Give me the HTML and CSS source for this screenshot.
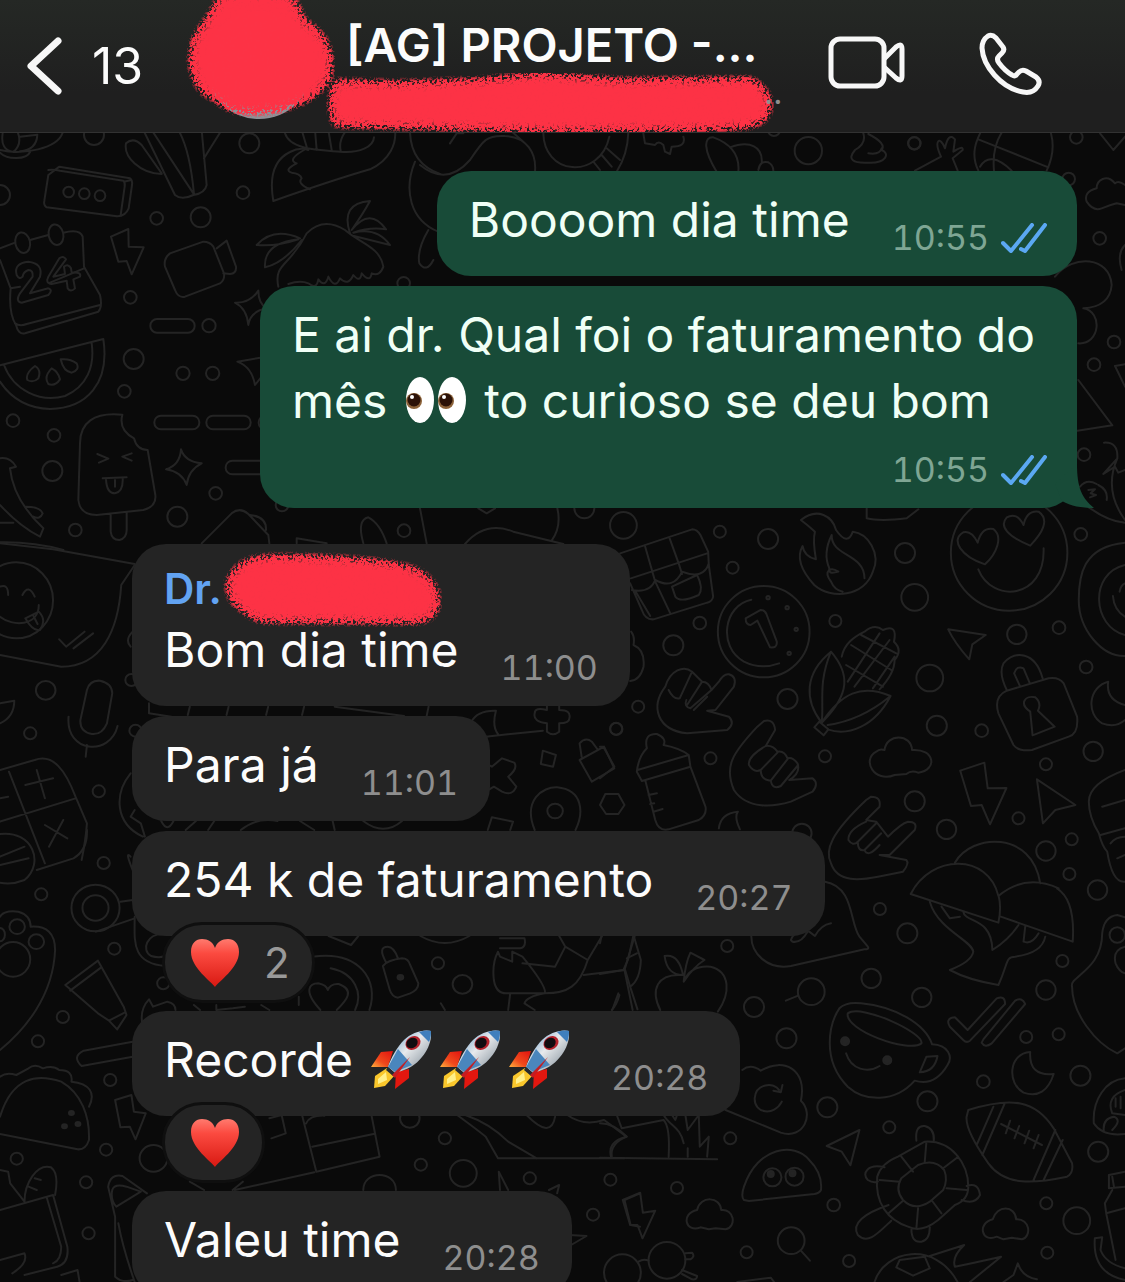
FILE: index.html
```
<!DOCTYPE html>
<html lang="pt-BR">
<head>
<meta charset="utf-8">
<meta name="viewport" content="width=device-width, initial-scale=1">
<title>[AG] PROJETO</title>
<link rel="stylesheet" href="styles.css">
</head>
<body>
<svg class="defs" aria-hidden="true">
  <defs>
    <filter id="crayon" x="-10%" y="-20%" width="120%" height="140%">
      <feTurbulence type="fractalNoise" baseFrequency="0.4" numOctaves="3" seed="4" result="grain"/>
      <feColorMatrix in="grain" type="matrix" values="0 0 0 0 0  0 0 0 0 0  0 0 0 0 0  6 0 0 0 -2.2" result="noise"/>
      <feGaussianBlur in="SourceAlpha" stdDeviation="5" result="soft"/>
      <feComposite in="soft" in2="noise" operator="arithmetic" k1="0" k2="1.7" k3="0.9" k4="-1.15"/>
      <feComponentTransfer result="mask"><feFuncA type="linear" slope="1.8" intercept="0"/></feComponentTransfer>
      <feFlood flood-color="#fd3345"/>
      <feComposite in2="mask" operator="in"/>
    </filter>
    <linearGradient id="heartRed" x1="0" y1="0" x2="0" y2="1"><stop offset="0" stop-color="#ff7a6e"/><stop offset=".3" stop-color="#fb4a40"/><stop offset="1" stop-color="#d81912"/></linearGradient>
    <linearGradient id="hull" x1="0" y1="0" x2="1" y2="1"><stop offset="0" stop-color="#4d8cc4"/><stop offset=".45" stop-color="#e8eaec"/><stop offset="1" stop-color="#6f7f8c"/></linearGradient>
    <linearGradient id="fin" x1="1" y1="0" x2="0" y2="1"><stop offset="0" stop-color="#e3120f"/><stop offset=".6" stop-color="#f04a1c"/><stop offset="1" stop-color="#ffb23e"/></linearGradient>
    <symbol id="heart" viewBox="0 0 50 50"><path fill="url(#heartRed)" d="M25 49C22 44 1 30 1 14C1 5 6 1 12 1C18 1 23 4 25 10C27 4 32 1 38 1C44 1 49 5 49 14C49 30 28 44 25 49Z"/></symbol>
    <symbol id="rocket" viewBox="0 0 60 60">
      <path fill="url(#fin)" d="M22 21L10 22L0 37L17 37Z"/>
      <path fill="#e3170f" d="M38 39L38 48L24 59L25 42Z"/>
      <path fill="#f9c72c" d="M16 38L4 46L3 58L14 56L24 45Z"/>
      <path fill="#fff08a" d="M15 42L7 49L7 54L16 50Z"/>
      <path fill="url(#hull)" d="M60 1C52 -1 40 3 33 10C26 17 20 28 17 37L24 43C36 40 45 35 51 27C58 19 61 8 60 1Z"/>
      <path fill="#3f7fbd" d="M60 1C56 0 51 1 48 2L58 12C60 8 60 4 60 1Z"/>
      <path fill="#4a86bd" d="M27 19L17 37L24 42L41 35Z"/>
      <path fill="#252a30" d="M17 37L24 43L22 46L15 40Z"/>
      <path fill="#c41d22" d="M39 27L21 45L24 48Z"/>
      <ellipse cx="42" cy="13" rx="8" ry="6.500" transform="rotate(-35 42 13)" fill="#b5222c"/>
      <ellipse cx="41" cy="13" rx="6" ry="5" transform="rotate(-35 41 13)" fill="#120c10"/>
    </symbol>
    <symbol id="eyes" viewBox="0 0 62 48">
      <ellipse cx="15" cy="24" rx="14" ry="23" fill="#fff"/><ellipse cx="47" cy="24" rx="14" ry="23" fill="#fff"/>
      <circle cx="9" cy="25" r="8" fill="#8c6239"/><circle cx="9" cy="24" r="6.500" fill="#2c1208"/><circle cx="7" cy="21" r="2" fill="#fff"/>
      <circle cx="41" cy="25" r="8" fill="#8c6239"/><circle cx="41" cy="24" r="6.500" fill="#2c1208"/><circle cx="39" cy="21" r="2" fill="#fff"/>
    </symbol>
    <symbol id="ticks" viewBox="0 0 46 30"><path fill="none" stroke="#5ba8f2" stroke-width="4" stroke-linecap="round" stroke-linejoin="round" d="M2 20L10 28L31 2M20 26L24 28L44 2"/></symbol>
  </defs>
</svg>

<header class="topbar">
  <button class="back" aria-label="Voltar, 13 conversas">
    <svg width="36" height="58" viewBox="0 0 36 58" aria-hidden="true"><path d="M32 4L5 29L32 54" fill="none" stroke="#f7f7f7" stroke-width="7" stroke-linecap="round" stroke-linejoin="round"/></svg>
    <span>13</span>
  </button>
  <svg class="avatar" width="150" height="132" viewBox="185 0 150 132" role="img" aria-label="Foto do grupo">
    <circle cx="259" cy="65" r="54" fill="#8d9197"/>
    <path filter="url(#crayon)" d="M222 -8L290 -8L300 8L304 20C330 32 336 58 330 80C320 96 300 106 288 108C276 113 252 115 236 112C222 109 214 97 204 95C184 74 186 40 204 22Z"/>
  </svg>
  <div class="group">
    <h1>[AG] PROJETO -...</h1>
    <div class="members">
      <svg width="448" height="60" viewBox="326 73 448 60" role="img" aria-label="Participantes ocultos"><path filter="url(#crayon)" d="M333 80L400 82L480 79L540 73L620 79L752 78C768 87 778 104 766 119C758 129 740 128 720 130L560 132L400 128L333 126L329 104Z"/></svg>
      <span>..</span>
    </div>
  </div>
  <button class="call" aria-label="Chamada de vídeo">
    <svg width="78" height="56" viewBox="0 0 78 56" aria-hidden="true"><g fill="none" stroke="#f7f7f7" stroke-width="5" stroke-linejoin="round"><rect x="3" y="3" width="53" height="47" rx="9"/><path d="M56 23L68 11Q74 6 74 13V40Q74 47 68 42L56 31"/></g></svg>
  </button>
  <button class="call" aria-label="Chamada de voz">
    <svg width="64" height="64" viewBox="0 0 64 64" aria-hidden="true"><path fill="none" stroke="#f7f7f7" stroke-width="5" stroke-linejoin="round" d="M9 4Q13 2 17 6L24 15Q26 18 23 21L20 24Q17 27 20 31Q26 39 33 43Q36 45 38 42L40 40Q43 37 47 39L57 45Q62 49 59 54Q54 62 44 60C22 56 4 34 3 16Q3 8 9 4Z"/></svg>
  </button>
</header>

<main class="chat">
  <svg class="wallpaper" viewBox="0 133 1125 1149" preserveAspectRatio="xMinYMin slice" aria-hidden="true">
    <g transform="translate(0 130) scale(.333333)">
      <path d="M0 68C20 90 80 90 90 66M0 60C60 75 180 60 190 0M8 10Q0 60 40 66Q70 40 50 0M60 20L112 14Q110 60 60 64"/>
      <path d="M145 135L178 110L390 145Q398 150 396 165L386 235Q375 262 345 258L140 232Q130 225 133 212ZM145 120Q160 118 180 122L370 152Q376 158 374 170L362 255M372 155L394 150"/>
      <circle cx="206" cy="186" r="16"/><circle cx="253" cy="191" r="16"/><circle cx="300" cy="197" r="16"/>
      <path d="M430 0L525 195Q545 212 580 195Q615 190 620 165L605 0M455 0L582 193M535 0Q570 60 582 193M665 0L612 85M485 132C420 130 370 80 378 40Q400 20 425 45L485 130"/>
      <path d="M855 10C870 60 960 60 1020 65C1080 70 1120 50 1122 22M820 213Q800 100 870 66Q900 50 925 60M820 213Q1000 150 1110 118C1170 90 1190 40 1185 0M912 60Q860 90 890 100Q850 120 875 128Q900 130 905 145Q890 160 930 178M905 0L920 50M945 0L950 60M985 0L995 60M1040 0Q1015 30 1022 62"/>
      <circle cx="282" cy="15" r="30"/><circle cx="748" cy="40" r="30"/><circle cx="729" cy="188" r="19"/><circle cx="0" cy="195" r="30"/><circle cx="470" cy="265" r="19"/><circle cx="602" cy="262" r="30"/>
      <path d="M0 355L45 338M90 330L145 315M190 308Q240 295 248 320L252 410L300 495Q308 530 295 545L75 610Q55 615 48 585Q25 550 32 475L0 390M252 415L150 458M32 475L60 470M45 580Q60 590 80 582L300 525"/>
      <ellipse cx="68" cy="338" rx="22" ry="31" transform="rotate(-12 68 338)"/><ellipse cx="168" cy="314" rx="22" ry="31" transform="rotate(-12 168 314)"/>
      <path d="M50 435Q40 400 85 395Q130 400 120 440L90 490L145 475Q160 480 145 495L65 518Q45 515 60 490L98 440Q100 420 85 420Q70 425 68 440Q58 450 50 435ZM178 385Q190 375 198 388L160 440L195 432L192 410Q205 400 213 415L215 428Q245 425 240 440L220 448L225 475Q212 488 203 475L200 452L155 462Q135 460 145 440Z"/>
      <path d="M333 320L385 297L386 350L431 352L395 433L380 393L355 395Z"/>
      <path d="M510 370L610 335Q630 335 640 350L672 430Q675 450 660 460L555 500Q535 505 525 480L495 410Q490 385 510 370ZM650 355L680 332L708 410Q710 430 690 432L670 430"/>
      <path d="M835 470C820 400 870 410 920 310Q970 260 1035 300C1080 340 1140 350 1150 410Q1140 440 1115 430Q1110 460 1085 430Q1080 460 1060 435Q1045 470 1020 445Q1005 480 985 440Q975 475 955 448Q950 480 925 460Q900 450 865 462M900 325Q820 290 770 345Q830 350 895 328Q790 340 795 412Q850 400 905 330M1050 310Q1020 220 1110 213Q1090 250 1055 300Q1110 230 1158 298Q1110 290 1060 308Q1130 290 1170 345L1062 318"/>
      <path d="M775 482Q775 520 800 535Q750 545 745 585Q740 535 705 518Q750 520 775 482ZM800 680L712 695Q755 710 765 765L785 740"/>
      <circle cx="391" cy="502" r="19"/><rect x="451" y="567" width="133" height="41" rx="20"/><circle cx="627" cy="587" r="20"/><circle cx="401" cy="687" r="30"/><circle cx="549" cy="730" r="20"/><circle cx="638" cy="730" r="20"/><circle cx="373" cy="784" r="19"/>
      <path d="M0 706L310 627C330 760 260 835 150 837C80 835 30 800 0 755M12 705C40 780 120 820 195 798C260 770 285 710 275 640M105 708Q75 730 82 750Q100 760 115 745Q125 720 105 708ZM155 715Q130 740 145 762Q165 770 180 748Q175 725 155 715ZM182 688Q190 725 215 728Q240 720 230 700Q210 685 182 688Z"/>
      <circle cx="39" cy="872" r="19"/><circle cx="162" cy="916" r="19"/><circle cx="157" cy="1023" r="30"/><circle cx="226" cy="1200" r="19"/><circle cx="647" cy="1090" r="19"/><circle cx="532" cy="1160" r="30"/>
      <path d="M367 854C280 845 240 880 240 940L235 1110Q240 1155 290 1155L430 1140Q470 1130 466 1095L443 960Q410 960 402 925Q355 900 367 854ZM292 972L325 986L297 998M395 970L367 980L395 992M308 1045L380 1042M318 1048Q320 1090 345 1090Q370 1085 368 1045M345 1050V1070M332 1155V1205Q335 1230 358 1230Q380 1225 380 1200V1148"/>
      <path d="M543 958Q555 995 605 1000Q565 1020 560 1065Q545 1025 498 1018Q540 1005 543 958Z"/>
      <rect x="463" y="857" width="135" height="41" rx="20"/><rect x="619" y="857" width="133" height="41" rx="20"/><rect x="776" y="857" width="133" height="41" rx="20"/><rect x="677" y="992" width="133" height="41" rx="20"/>
      <path d="M0 985Q30 980 48 1010L30 1015M30 1015Q40 1110 130 1195L120 1220Q60 1190 0 1125M78 1130Q120 1130 128 1150Q120 1170 100 1160M0 1178H40M0 1237Q100 1235 190 1260"/>
      <path d="M605 1240L695 1150Q720 1130 745 1152L805 1215L808 1240M750 1155Q800 1160 798 1200M1090 1240Q1070 1170 1105 1162Q1140 1180 1160 1240M1260 1135L1280 1240M890 1240V1225L980 1240"/><circle cx="1212" cy="1202" r="19"/><circle cx="846" cy="1125" r="19"/>
      <path d="M1230 0Q1230 100 1320 132M1245 95C1210 180 1230 270 1315 305M1285 300Q1250 360 1258 400Q1280 430 1300 390"/><circle cx="1211" cy="460" r="19"/>
    </g>
    <g transform="translate(420 130) scale(.333333)">
      <path d="M0 105Q80 170 150 90C190 30 200 15 255 18C320 20 350 70 345 125M90 40L110 10L130 10M270 0L310 35M370 0C365 140 540 150 568 20M625 0Q625 70 590 125M560 55L600 90M545 75L575 110M520 95L540 120M670 10L675 40L705 45Q715 30 730 45L735 65L750 72L755 50Q800 50 790 20M890 125C850 60 850 20 880 22C930 40 960 70 955 125M930 52C990 30 1030 50 1025 100M1015 120Q1020 90 1045 97Q1060 105 1060 122M1330 10Q1340 40 1305 60C1280 90 1300 100 1345 98C1400 100 1410 70 1385 60Q1400 40 1345 12M1345 70Q1380 75 1385 55"/><circle cx="1165" cy="62" r="41"/><circle cx="1062" cy="0" r="18"/><circle cx="1483" cy="40" r="18"/>
    </g>
    <g transform="translate(180 500) scale(.333333)">
      <path d="M855 132C900 80 950 75 1000 95L1150 132M1132 25Q1145 80 1115 122M895 25L920 40L945 25"/><circle cx="1213" cy="25" r="30"/>
    </g>
    <g transform="translate(860 130) scale(.333333)">
      <path d="M165 122L243 80C220 30 240 15 255 55Q265 5 285 28L280 65Q310 45 308 60L278 85L293 122M355 122C330 70 350 30 365 0M560 122Q590 60 570 0M355 28L565 112M430 0Q395 50 402 122M360 110Q390 60 455 122"/>
      <circle cx="163" cy="40" r="19"/><circle cx="649" cy="22" r="19"/><circle cx="626" cy="147" r="19"/><circle cx="719" cy="325" r="19"/><circle cx="762" cy="636" r="19"/><circle cx="702" cy="704" r="19"/><circle cx="672" cy="974" r="19"/>
      <path d="M795 165Q775 150 765 160C740 130 710 150 710 175Q670 185 680 215Q700 245 725 235Q750 225 770 220L795 225M795 20L760 60L720 10M585 440C640 370 750 380 755 465Q750 530 670 535C730 545 720 645 655 640M795 345Q770 370 785 420M655 750L757 886L652 902M765 708L795 703M765 708L795 770M732 938Q775 935 772 985L730 1032L765 1010L775 1028L795 1020M772 985Q730 1080 795 1170M660 1070Q680 1045 710 1062M685 1080L705 1078L692 1090L708 1095L690 1102M715 1065Q745 1080 740 1110"/>
      <path d="M20 1135V1165Q60 1175 140 1165L175 1138"/>
    </g>
    <g transform="translate(600 500) scale(.3348 .333333)">
      <circle cx="70" cy="76" r="40"/><circle cx="358" cy="95" r="18"/><circle cx="502" cy="117" r="30"/><circle cx="396" cy="203" r="18"/><circle cx="298" cy="369" r="19"/><circle cx="219" cy="436" r="30"/><circle cx="911" cy="159" r="30"/><circle cx="940" cy="292" r="40"/><circle cx="703" cy="363" r="18"/><circle cx="985" cy="534" r="40"/><circle cx="1245" cy="403" r="29"/><circle cx="1371" cy="383" r="19"/><circle cx="1436" cy="103" r="19"/><circle cx="1452" cy="501" r="19"/><circle cx="560" cy="597" r="30"/><circle cx="1006" cy="677" r="30"/><circle cx="1140" cy="692" r="19"/><circle cx="672" cy="769" r="18"/><circle cx="1473" cy="754" r="29"/><circle cx="1332" cy="793" r="18"/><circle cx="330" cy="775" r="18"/><circle cx="114" cy="620" r="18"/><circle cx="48" cy="686" r="18"/><circle cx="940" cy="904" r="30"/><circle cx="1035" cy="988" r="29"/><circle cx="1250" cy="955" r="18"/><circle cx="1332" cy="1053" r="29"/><circle cx="1409" cy="1018" r="18"/><circle cx="1402" cy="1122" r="18"/><circle cx="1486" cy="1170" r="29"/><circle cx="603" cy="1000" r="29"/>
      <path d="M60 160L275 88Q290 88 300 105L323 155L325 195L338 290Q335 305 320 308L160 358Q135 360 125 330L90 250M92 235L320 160M135 140L165 245L210 340M208 115L235 190L245 222M95 270Q150 280 165 240Q220 270 245 215Q310 240 325 190M105 272L150 348M215 260L290 225Q310 265 295 285Q240 310 225 290Z"/>
      <path d="M600 60C650 20 695 50 705 90Q740 140 755 95C800 100 840 160 815 215C790 290 690 300 640 255C590 200 590 165 605 138Q610 170 645 178Q635 120 642 95Q620 75 600 60ZM790 235C790 160 690 170 692 105Q665 160 685 205Q680 225 712 215C690 200 665 210 690 245Q700 270 725 275"/>
      <circle cx="489" cy="395" r="137"/><path d="M452 299C370 315 350 440 430 485Q480 510 535 490M435 355L480 330Q492 330 497 342L528 425Q530 445 508 442L470 362L450 375Q435 375 435 355Z"/><circle cx="502" cy="293" r="5"/><circle cx="559" cy="323" r="5"/><circle cx="586" cy="388" r="5"/><circle cx="565" cy="460" r="5"/>
      <path d="M690 455C610 520 610 600 662 668C670 610 650 550 690 455ZM690 455C745 520 750 580 662 668M662 668C720 580 780 550 868 588C820 680 740 710 680 688M680 675Q780 660 865 590M640 682L655 665L682 688L668 706ZM722 470C730 430 760 410 790 395Q820 370 845 390Q890 370 878 425Q905 450 880 480Q880 520 835 568M735 495L845 560M750 435L870 510M780 405L885 460M740 545L835 400M760 560L865 420M815 565L880 470"/>
      <circle cx="1222" cy="158" r="174"/><path d="M1150 193C1080 170 1045 120 1085 97Q1110 90 1128 128Q1140 80 1175 87C1205 110 1185 160 1150 193ZM1285 137C1220 110 1190 80 1215 52Q1245 35 1265 75Q1275 30 1310 35C1345 60 1320 100 1285 137ZM1130 208C1170 310 1330 300 1325 145"/>
      <path d="M1568 128C1440 140 1430 230 1430 300C1430 390 1500 470 1568 468M1568 195C1460 220 1470 380 1568 405M1552 275Q1555 255 1568 250M1532 288Q1535 330 1568 350M1460 22Q1520 65 1568 68"/>
      <path d="M1040 388L1152 405L1112 433L1103 478Q1060 430 1040 388ZM1076 812L1148 788L1158 865L1214 864L1165 973L1140 915L1108 918ZM1305 838L1420 915L1360 930L1323 970Z"/>
      <path d="M1215 572L1340 535Q1370 530 1385 550L1425 650Q1430 700 1400 710L1290 750Q1250 755 1235 735L1190 640Q1175 590 1215 572ZM1215 570Q1190 520 1205 490C1240 450 1300 455 1322 535M1255 560L1237 520Q1245 495 1265 505L1283 548M1285 635C1250 610 1270 585 1300 592Q1320 610 1308 632L1358 680L1292 706Z"/>
      <path d="M1518 545C1460 560 1450 640 1500 670Q1540 685 1568 660M1518 545Q1510 600 1568 615M850 750C855 700 930 700 932 750C1000 745 1010 810 950 818Q930 810 915 822L880 825C820 850 780 780 825 755Q835 745 850 750Z"/>
      <path d="M195 560C150 620 170 690 260 700L380 690Q405 670 385 650L320 632L345 630L400 560Q410 530 385 523Q370 520 355 545L333 570Q325 545 305 545Q285 525 275 515C250 495 210 510 195 560ZM275 515L238 595Q220 600 205 570M305 545L260 615M333 570L270 625Q250 620 258 600M320 590L280 630"/>
      <path d="M470 680C395 760 370 800 400 870C440 930 520 920 570 905L635 875Q655 850 635 835L565 840Q600 820 590 790Q575 770 560 775Q550 750 530 755Q515 735 495 738L523 690Q520 655 490 663ZM495 738Q440 770 445 795Q460 820 480 810L530 758M480 810Q480 840 510 842L562 775M510 842Q515 870 540 858L592 795"/>
      <path d="M795 900C690 1000 670 1050 690 1090C710 1150 780 1140 830 1130L905 1115Q925 1090 915 1080L835 1065L865 1065L940 990Q950 965 920 965Q900 970 860 1010L825 965L795 960L835 920Q840 890 810 890ZM795 965Q740 990 742 1020Q755 1040 770 1025L825 970M770 1025Q770 1055 790 1050L840 1000M790 1050Q800 1075 835 1035"/>
      <path d="M140 745Q130 700 170 702Q200 715 190 735Q240 745 265 765L270 800L125 843L110 815Q115 770 140 745ZM112 810L265 765M135 840L165 960Q175 995 205 988L295 960Q320 945 315 920L270 800M145 885L170 880M150 912L162 910M160 935L187 927M0 740H10L43 800L0 835M355 985Q360 940 412 935Q400 950 418 988M93 395Q105 410 100 435Q135 450 130 500Q120 540 90 543M1568 810Q1460 850 1460 905Q1460 950 1490 1000Q1500 1040 1515 1055Q1530 1150 1568 1145M1500 920L1568 900M1495 1005L1568 985M1525 1030Q1540 1010 1568 1010M1545 1075L1568 1065"/>
      <path d="M1060 1088C1110 1000 1290 990 1315 1150M928 1182C990 1060 1160 1060 1190 1188Q1270 1120 1370 1165M928 1182L1190 1268Q1200 1220 1190 1185M1365 1165Q1420 1200 1412 1325L1197 1250M985 1205C1010 1290 1110 1320 1115 1355Q1110 1385 1045 1410Q1100 1440 1190 1455C1220 1390 1210 1370 1240 1370Q1320 1360 1330 1310M1085 1235C1090 1270 1170 1250 1172 1350Q1220 1320 1250 1275M1270 1280L1265 1325Q1290 1335 1310 1300M1020 1220L1045 1255L1075 1250"/>
    </g>
    <g transform="translate(600 880) scale(.3348 .333333)">
      <circle cx="836" cy="87" r="18"/><circle cx="918" cy="160" r="30"/><circle cx="380" cy="198" r="18"/><circle cx="810" cy="295" r="29"/><circle cx="961" cy="352" r="29"/><circle cx="1332" cy="330" r="29"/><circle cx="1381" cy="243" r="18"/><circle cx="460" cy="381" r="30"/><circle cx="557" cy="475" r="30"/><circle cx="1273" cy="471" r="18"/><circle cx="1370" cy="463" r="18"/><circle cx="1435" cy="587" r="30"/><circle cx="1145" cy="605" r="19"/><circle cx="978" cy="664" r="30"/><circle cx="679" cy="682" r="30"/><circle cx="864" cy="742" r="18"/><circle cx="389" cy="775" r="18"/><circle cx="31" cy="899" r="18"/><circle cx="230" cy="924" r="18"/><circle cx="698" cy="975" r="19"/><circle cx="1488" cy="815" r="30"/><circle cx="1333" cy="970" r="18"/><circle cx="1424" cy="1022" r="40"/><circle cx="1336" cy="1118" r="18"/><circle cx="438" cy="1117" r="18"/><circle cx="744" cy="1143" r="18"/><circle cx="1545" cy="165" r="23"/>
      <path d="M672 5C760 20 745 130 775 170L800 200Q805 208 790 208L570 258C500 270 450 220 452 165M570 180Q580 150 620 155Q600 190 575 185ZM625 155L642 168Q660 135 690 130"/>
      <circle cx="631" cy="335" r="40"/><path d="M592 347L555 362"/>
      <path d="M180 390C150 330 170 280 245 285M250 305Q270 255 330 260C390 275 390 340 352 395M250 305Q255 250 270 218L312 240Q280 260 250 305ZM248 285Q235 220 193 228Q200 285 248 285M100 165L85 235L70 270L0 282M100 165L122 240Q120 300 90 320L75 270M80 235L110 220M90 320L112 388M58 345Q50 375 35 390M0 190L5 165"/>
      <path d="M715 385Q735 365 780 370C880 380 970 430 992 493C1040 495 1055 530 1038 555Q1000 620 940 602C880 670 790 665 740 620C660 540 685 430 715 385ZM740 400C780 370 970 460 960 490C920 520 730 450 740 400ZM735 520C750 570 800 580 835 558M975 530L1008 528Q1000 575 955 577Z"/><circle cx="732" cy="484" r="12" class="solid"/><circle cx="858" cy="541" r="12" class="solid"/>
      <path d="M1045 440Q1030 415 1060 412L1098 450L1185 355Q1210 345 1210 372L1105 482Q1095 490 1085 480ZM1145 478L1240 362Q1260 350 1270 372L1170 490Q1150 505 1140 488ZM1285 516C1220 520 1215 610 1265 638Q1330 660 1355 582Q1280 590 1285 516Z"/>
      <path d="M425 570Q450 550 480 572C550 530 620 570 600 662C640 700 610 780 540 758L375 690M543 665C520 710 460 700 462 655C465 610 520 605 535 630M545 615L540 637L518 632"/>
      <path d="M1100 690C1230 650 1300 660 1355 745L1410 850Q1415 880 1395 890C1300 910 1210 920 1160 850Q1090 750 1095 710ZM1175 680L1125 795M1208 672L1142 825M1360 750L1295 900M1382 780L1325 900M1198 732L1320 795M1225 722L1212 760M1252 738L1238 775M1282 752L1268 790M1310 765L1295 805"/>
      <path d="M677 798L775 750L748 856L722 815ZM430 960Q420 950 430 920C470 800 580 785 625 840Q665 880 660 930Q655 940 640 942L445 963Z"/><circle cx="515" cy="892" r="27"/><circle cx="581" cy="890" r="27"/><circle cx="510" cy="882" r="9" class="solid"/><circle cx="575" cy="880" r="9" class="solid"/>
      <path d="M970 785C1050 780 1100 850 1100 920Q1100 960 1060 975L1010 1020Q960 1060 920 1040C860 1020 820 970 828 890Q840 850 890 830ZM950 855Q1000 835 1028 870Q1040 900 1025 930L985 965Q940 995 905 960Q880 930 900 895ZM975 785L970 845M900 830L935 875M835 900L895 905M1070 830L1025 865M1095 930L1035 925M1020 1000L990 960M945 1045L950 985M862 1000L905 962M945 782Q940 735 970 738Q1000 745 997 782M850 862C800 850 780 880 800 900Q815 910 830 905M862 975C790 1000 750 1030 770 1065C800 1095 830 1060 870 1022M930 1045Q930 1090 960 1085Q985 1080 985 1042M1080 960Q1120 975 1135 945Q1130 905 1095 918"/>
      <path d="M68 960L120 938L128 998L165 992L127 1075L112 1035H90ZM290 990C300 945 360 950 362 990C400 985 410 1040 375 1048L345 1045L325 1048L300 1042C255 1060 240 1000 290 990ZM1173 1018C1185 975 1240 975 1243 1018C1285 1015 1290 1070 1260 1078L1230 1073L1205 1078L1185 1070C1140 1090 1125 1030 1173 1018Z"/>
      <circle cx="571" cy="1082" r="40"/><path d="M600 1112L627 1142"/><circle cx="67" cy="1178" r="55"/><circle cx="200" cy="1141" r="55"/><path d="M115 1145Q130 1135 145 1142M255 1120L275 1118Q285 1130 270 1138L255 1138M245 1170L290 1188Q290 1200 275 1198L245 1182M410 1206L510 1193L520 1206"/>
      <path d="M820 1206C850 1110 1000 1080 1068 1206M895 1140L970 1130L985 1165L935 1187L885 1162ZM985 1128L1088 1095Q1050 1130 1060 1160Q1110 1150 1198 1130L1105 1206M1205 1206L1235 1185L1248 1150Q1260 1190 1305 1198"/>
      <path d="M1500 160Q1505 110 1545 105L1568 112M1500 160C1500 270 1400 290 1410 320C1410 400 1480 490 1545 520L1568 505M1568 200Q1530 210 1540 250Q1550 275 1568 280M1568 595C1510 600 1470 660 1475 730Q1500 770 1568 762M1568 630Q1510 650 1530 700L1568 705M1505 755Q1500 715 1535 710Q1560 720 1530 750M1540 655V680M1555 650V685M1520 885L1568 875M1520 885V925L1568 920M1530 890L1535 920M1530 930L1508 970L1512 1000L1540 1140M1512 1000L1568 985M1478 1075L1500 1072L1495 1110Q1510 1150 1568 1165M1478 1075Q1470 1180 1568 1200"/>
      <path d="M0 730Q40 730 80 770Q30 790 35 830M50 705L65 745L190 720Q210 740 205 830M0 833L350 838M190 705C210 740 240 740 250 790M215 705L225 720L230 705M255 705L262 750L295 705L298 800L325 770L320 830M262 805V830"/>
    </g>
    <g transform="translate(0 540) scale(.40816 .333333)">
      <ellipse cx="40" cy="181" rx="90" ry="114"/><path d="M0 10L130 28L330 72M330 75L297 135C290 270 250 380 150 380L0 345M0 140Q20 130 20 165M55 165Q70 130 85 170M0 230C30 260 95 260 95 195M62 235L95 215Q115 240 98 270Q80 275 62 235ZM82 228L92 252M145 298L162 320L207 275M180 325L228 280"/>
      <ellipse cx="112" cy="451" rx="24" ry="28"/><ellipse cx="74" cy="580" rx="15" ry="18"/><ellipse cx="242" cy="754" rx="15" ry="18"/><ellipse cx="322" cy="420" rx="15" ry="18"/><ellipse cx="332" cy="572" rx="15" ry="18"/><ellipse cx="1510" cy="567" rx="15" ry="18"/>
      <path d="M213 450Q220 420 245 422Q275 430 275 460L262 550Q250 585 225 582Q195 575 197 540ZM168 530C160 640 270 650 288 558M213 615L210 650M0 490L35 482Q35 530 0 550M0 690L85 660C130 640 160 690 185 770L213 850Q210 900 200 960M0 845L185 775M22 695L110 970M62 735L130 715M90 690L110 775M0 775L20 770M110 855L165 895M155 840L120 920"/>
      <path d="M320 320Q305 300 325 275M320 700C280 760 280 850 350 890M330 810L320 830L345 850L355 890M365 490V520L420 530M465 500L460 525M560 500L555 525M657 500L652 525M745 500L740 525M820 500L990 528M1050 500L1045 530M1155 545Q1170 510 1215 512M1215 512Q1205 560 1220 582M1190 590L1330 572M1310 520Q1310 500 1340 510V498M1370 498V510Q1400 510 1395 535Q1395 550 1370 550V575Q1355 590 1340 575V550Q1305 545 1310 520"/>
      <path d="M1190 670L1205 680L1230 655L1260 668Q1270 685 1245 710L1265 740Q1255 770 1230 755L1210 740L1190 755M1330 632L1362 645L1355 680L1325 672ZM1420 660L1480 620L1505 685L1450 725ZM1425 650L1420 610Q1435 590 1450 605L1465 630M1310 870C1280 780 1330 740 1365 742C1430 750 1430 820 1410 870M1195 870L1205 832L1257 845L1250 870"/><ellipse cx="1360" cy="813" rx="19" ry="22"/><path d="M1483 762H1515L1530 795L1515 822H1485L1470 795Z"/>
      <path d="M395 843Q410 880 425 843M480 843L455 870M525 843L510 870M590 870Q630 830 680 843M735 843L770 870M815 843L820 870M890 843Q940 890 985 843"/>
    </g>
    <g transform="translate(0 830) scale(.40816 .333333)">
      <path d="M0 12C80 0 110 100 60 150Q30 165 0 158M0 80L60 50M0 105L70 85M90 120L180 85Q215 60 213 0"/>
      <ellipse cx="254" cy="99" rx="15" ry="18"/><ellipse cx="101" cy="193" rx="15" ry="18"/><ellipse cx="280" cy="356" rx="15" ry="18"/><ellipse cx="234" cy="234" rx="59" ry="70"/><ellipse cx="234" cy="234" rx="32" ry="38"/><path d="M295 215L325 210M235 305L330 265M325 120Q305 60 320 80M330 260C330 330 320 400 405 408M400 312C360 310 345 360 370 378Q390 385 405 378"/>
      <path d="M0 260Q10 240 45 245Q75 255 75 290Q135 285 135 360C130 500 60 600 0 660"/><ellipse cx="42" cy="290" rx="19" ry="22"/><ellipse cx="89" cy="335" rx="19" ry="22"/><ellipse cx="32" cy="388" rx="42" ry="52"/><ellipse cx="0" cy="314" rx="12" ry="20"/>
      <path d="M160 465L240 392L303 530L310 555L287 598L267 572L240 550ZM172 482L248 412M267 572L305 548"/><ellipse cx="154" cy="561" rx="15" ry="18"/><ellipse cx="93" cy="634" rx="15" ry="18"/><ellipse cx="270" cy="750" rx="15" ry="18"/><ellipse cx="260" cy="959" rx="15" ry="18"/><ellipse cx="41" cy="986" rx="15" ry="18"/><ellipse cx="211" cy="1057" rx="15" ry="18"/><ellipse cx="217" cy="1210" rx="15" ry="18"/><ellipse cx="376" cy="985" rx="34" ry="40"/><ellipse cx="400" cy="460" rx="15" ry="18"/>
      <path d="M325 635L205 662Q175 680 200 708L325 680M350 590Q340 540 365 508L375 530L410 515Q430 520 430 540M0 740Q15 725 40 735L70 715Q85 700 105 715Q130 705 145 720Q180 720 175 755C220 760 235 790 218 830M0 860C30 740 90 730 150 755C200 790 220 860 218 930Q210 960 190 958L0 912"/><circle cx="175" cy="849" r="6" class="solid"/><circle cx="158" cy="889" r="6" class="solid"/><circle cx="191" cy="882" r="6" class="solid"/>
      <path d="M282 810L322 795L328 845L357 850L332 928L318 890L295 892ZM0 1140L130 1095L165 1250Q170 1300 140 1310L60 1335M115 1105L150 1250Q150 1290 130 1300M60 1115C60 1060 90 1000 125 1012Q145 1030 135 1095M0 1020L20 1025L25 1060L60 1115M85 1045L100 1050M70 1070L90 1080M0 1290L60 1270Q70 1300 30 1330M150 1335L190 1320L195 1356M330 1356Q300 1250 290 1180M282 1340V1160L265 1070Q270 1030 300 1038L360 1090M275 1080Q280 1060 310 1070L345 1085L285 1130Q270 1110 275 1080M282 1340Q300 1360 325 1350"/>
      <path d="M765 380C880 360 930 450 905 540M810 415C870 430 890 490 870 540M785 540C740 480 760 460 780 460Q800 465 803 480Q810 460 830 462C870 480 850 510 825 540M938 408Q950 390 985 385Q1000 385 1005 405L1025 460Q1025 480 1005 490L975 503Q960 500 955 480ZM945 395Q925 350 950 350Q965 350 975 385"/><circle cx="981" cy="442" r="7" class="solid"/><ellipse cx="1073" cy="400" rx="15" ry="18"/><ellipse cx="1133" cy="463" rx="24" ry="28"/>
      <path d="M805 318L860 345L878 318M1030 318Q1090 360 1150 318M1225 325L1285 325Q1290 350 1275 355H1225M1220 365Q1205 400 1210 450Q1215 490 1240 490H1335Q1340 470 1280 380L1255 365V395L1225 380ZM1280 400L1360 410L1385 350L1370 318M1385 350L1440 390C1420 470 1390 490 1335 490M1440 390L1475 318M1250 490L1245 540M1335 490Q1290 500 1285 520L1310 540M1430 435L1530 420L1555 318M1530 420L1550 540M1515 490L1500 540M1080 520L1090 540M732 500V525M475 525L490 540M530 525V540L570 535L600 530M640 525L660 540"/>
      <path d="M740 855L775 1025L930 980L910 855M750 880Q760 855 795 857M765 950L915 912M575 1080L770 1027M465 1055L500 1080M595 1055L570 1080M660 865L690 855L700 910L665 925M890 1080C890 1020 970 1020 970 1080M1120 855Q1170 900 1190 920L1220 985H1530M1140 855Q1200 880 1245 935L1315 985M1290 855Q1350 930 1360 860M1390 855Q1430 890 1480 870L1535 920Q1485 935 1498 985M1225 1080L1222 1025L1245 1080M1345 1080L1370 1065L1365 1090M1395 1215L1437 1218L1395 1248M1530 1110L1568 1090M1530 1110L1545 1185L1568 1190"/>
      <ellipse cx="1004" cy="865" rx="24" ry="28"/><ellipse cx="1090" cy="925" rx="15" ry="18"/><ellipse cx="1031" cy="1004" rx="15" ry="18"/><ellipse cx="1135" cy="1030" rx="33" ry="40"/><ellipse cx="1298" cy="1045" rx="15" ry="18"/><ellipse cx="1453" cy="1154" rx="15" ry="18"/>
    </g>
  </svg>

  <section class="messages" aria-label="Mensagens">
    <article class="bubble out">
      <p>Boooom dia time</p>
      <div class="meta"><time>10:55</time><svg width="46" height="30" role="img" aria-label="Lida"><use href="#ticks"/></svg></div>
    </article>
    <article class="bubble out long">
      <p>E ai dr. Qual foi o faturamento do<br>mês <svg class="eyes" width="62" height="48" role="img" aria-label="olhos"><use href="#eyes"/></svg> to curioso se deu bom</p>
      <div class="meta"><time>10:55</time><svg width="46" height="30" role="img" aria-label="Lida"><use href="#ticks"/></svg></div>
      <svg class="tail" width="40" height="44" viewBox="0 0 40 44" aria-hidden="true"><path fill="#184b38" d="M22 0C22 24 27 34 39 44C26 44 16 42 7 37L0 20Z"/></svg>
    </article>

    <article class="bubble first">
      <div>
        <div class="sender">Dr.<svg width="220" height="76" viewBox="221 550 220 76" role="img" aria-label="Nome oculto"><path filter="url(#crayon)" d="M225 584C230 565 244 556 266 555C320 554 380 557 410 566C426 570 440 586 438 600C438 614 430 622 410 622L262 621C246 618 238 606 230 601Z"/></svg></div>
        <p>Bom dia time</p>
      </div>
      <div class="meta"><time>11:00</time></div>
    </article>
    <article class="bubble"><p>Para já</p><div class="meta"><time>11:01</time></div></article>
    <article class="bubble"><p>254 k de faturamento</p><div class="meta"><time>20:27</time></div></article>
    <button class="reaction" aria-label="2 reações de coração"><svg width="50" height="50" aria-hidden="true"><use href="#heart"/></svg><span>2</span></button>
    <article class="bubble">
      <p class="with-emoji">Recorde <span class="rockets"><svg width="60" height="60" role="img" aria-label="foguete"><use href="#rocket"/></svg><svg width="60" height="60" role="img" aria-label="foguete"><use href="#rocket"/></svg><svg width="60" height="60" role="img" aria-label="foguete"><use href="#rocket"/></svg></span></p>
      <div class="meta"><time>20:28</time></div>
    </article>
    <button class="reaction" aria-label="1 reação de coração"><svg width="50" height="50" aria-hidden="true"><use href="#heart"/></svg></button>
    <article class="bubble"><p>Valeu time</p><div class="meta"><time>20:28</time></div></article>
  </section>
</main>
</body>
</html>
```
FILE: styles.css
```
* { box-sizing: border-box; }

body {
  margin: 0;
  height: 100vh;
  display: flex;
  flex-direction: column;
  overflow: hidden;
  background: #0a0a0a;
  color: #fcfcfc;
  font-family: Inter, "Liberation Sans", sans-serif;
}

.defs { position: absolute; width: 0; height: 0; }
button { border: 0; padding: 0; background: none; color: inherit; font: inherit; }
svg { display: block; flex: none; }
h1, p { margin: 0; }

.topbar {
  flex: none;
  display: flex;
  align-items: center;
  height: 133px;
  padding: 0 82px 0 26px;
  overflow: hidden;
  background: linear-gradient(#252825, #1f1f1f 70%);
  border-bottom: 1px solid #323232;
}

.back { display: flex; align-items: center; gap: 30px; width: 159px; font-size: 50px; }
.avatar { align-self: flex-start; }
.group { flex: 1; align-self: flex-start; min-width: 0; padding: 16px 0 0 11px; }
.group h1 { font-size: 47px; line-height: 58px; font-weight: 600; white-space: nowrap; }
.members { display: flex; align-items: center; margin: -1px 0 0 -20px; color: #8e8e8e; font-size: 32px; line-height: 36px; }
.members span { margin: -20px 0 0 -10px; }
.call { margin-bottom: 4px; }
.call + .call { margin-left: 73px; }

.chat { position: relative; flex: 1; min-height: 0; }
.wallpaper {
  position: absolute;
  inset: 0;
  width: 100%;
  height: 100%;
  fill: none;
  stroke: #242424;
  stroke-linecap: round;
  stroke-linejoin: round;
}
.wallpaper * { stroke-width: 2px; vector-effect: non-scaling-stroke; }
.wallpaper .solid { fill: #242424; }

.messages {
  position: relative;
  height: 100%;
  padding: 38px 48px 38px 132px;
  display: flex;
  flex-direction: column;
  align-items: flex-start;
  gap: 10px;
  overflow-y: auto;
  scrollbar-width: none;
}

.bubble {
  position: relative;
  flex: none;
  display: flex;
  justify-content: space-between;
  gap: 42px;
  min-height: 105px;
  padding: 16px 32px;
  border-radius: 34px;
  background: #242424;
  font-size: 48px;
  line-height: 66px;
}
.meta {
  align-self: flex-end;
  display: flex;
  align-items: center;
  gap: 12px;
  color: #8e8e8e;
  font-size: 34px;
  line-height: 44px;
  font-variant-numeric: tabular-nums;
}

.out { align-self: flex-end; padding-right: 30px; background: #184b38; color: #f0fff6; }
.out .meta { color: #7fa694; }
.long { flex-direction: column; gap: 14px; }
.long p { padding-right: 12px; }
.tail { position: absolute; right: -18px; bottom: 0; }
.eyes { display: inline-block; vertical-align: middle; margin: -10px 4px 0; }

.first { min-height: 162px; margin-top: 26px; }
.sender {
  display: flex;
  align-items: center;
  height: 57px;
  color: #62a3f2;
  font-size: 42px;
  font-weight: 600;
}

.with-emoji { display: flex; gap: 18px; }
.rockets { display: flex; align-items: center; gap: 9px; height: 66px; }

.reaction {
  position: relative;
  z-index: 1;
  flex: none;
  display: flex;
  align-items: center;
  gap: 24px;
  height: 81px;
  margin: -24px 0 -2px 30px;
  padding: 0 22px 0 25px;
  border: 3px solid #0f0f0f;
  border-radius: 40px;
  background: #242424;
  color: #999;
  font-size: 42px;
}
```
